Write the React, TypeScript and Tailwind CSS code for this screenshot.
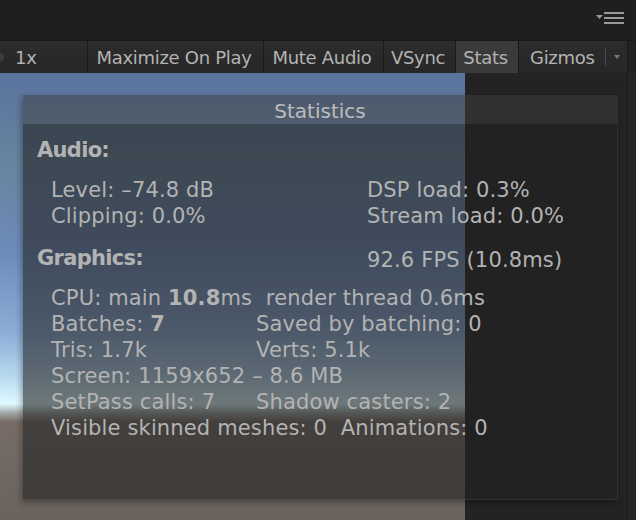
const font = { fontFamily: '"DejaVu Sans", "Liberation Sans", sans-serif' };

const Sep = () => <div className="w-px self-stretch bg-[#191919]" />;

const ToolButton = ({ label, width, active = false }: { label: string; width: string; active?: boolean }) => (
    <>
        <div
            className={`${width} flex items-center justify-center pr-[3px] ${
                active ? 'bg-[#3a3a3a]' : ''
            }`}
        >
            {label}
        </div>
        <Sep />
    </>
);

const Row = ({ left, right }: { left: React.ReactNode; right?: React.ReactNode }) => (
    <div className="flex h-[26px] items-center whitespace-nowrap">
        <div className="w-[205px]">{left}</div>
        {right && <div>{right}</div>}
    </div>
);

export default function App() {
    return (
        <div
            className="relative w-[636px] h-[520px] overflow-hidden bg-[#1f1f1f] flex flex-col text-[#b3b3b3]"
            style={font}
        >
            <div className="h-[40px] flex justify-end items-center pr-[12px] pb-[2px]">
                <svg width="28" height="14" viewBox="0 0 28 14">
                    <polygon points="0,3 7,3 3.5,7" fill="#9a9a9a" />
                    <rect x="8" y="0" width="20" height="2" fill="#9a9a9a" />
                    <rect x="8" y="5" width="20" height="2" fill="#9a9a9a" />
                    <rect x="8" y="10" width="20" height="2" fill="#9a9a9a" />
                </svg>
            </div>

            <div className="h-[33px] flex bg-gradient-to-b from-[#2c2c2c] to-[#272727] text-[18px] tracking-[-0.3px] border-t border-[#191919]">
                <div className="w-[87px] flex items-center relative">
                    <div className="w-[4px] h-[8px] rounded-r-full bg-[#3c3c3c]" />
                    <span className="ml-[11px]">1x</span>
                </div>
                <Sep />
                <ToolButton label="Maximize On Play" width="w-[175px]" />
                <ToolButton label="Mute Audio" width="w-[119px]" />
                <ToolButton label="VSync" width="w-[71px]" />
                <ToolButton label="Stats" width="w-[62px]" active />
                <div className="w-[108px] flex items-center">
                    <span className="ml-[11px] w-[75px]">Gizmos</span>
                    <div className="w-px h-[18px] bg-[#4a4a4a]" />
                    <svg width="20" height="8" viewBox="0 0 20 8" className="ml-[1px]">
                        <polygon points="7,2 13,2 10,6" fill="#7a7a7a" />
                    </svg>
                </div>
                <Sep />
                <div className="flex-1 bg-[#222]" />
            </div>

            <div className="flex-1 flex">
                <div className="w-[465px] bg-[linear-gradient(to_bottom,#5a739e_0%,#67849f_20%,#6d8bb9_40%,#8cadd6_58%,#b9d9f0_68%,#e0faff_74%,#a3aaa9_76%,#776d66_78%,#6b625d_100%)]" />
                <div className="flex-1 bg-[#232323] flex justify-end">
                    <div className="w-[9px] bg-[#262626] border-l border-[#1c1c1c]" />
                </div>
            </div>

            <div className="absolute left-[23px] top-[95px] w-[595px] h-[405px] flex flex-col border-r border-b border-[#3a3a3a]/60 shadow-[-2px_3px_6px_rgba(0,0,0,0.3)]">
                <div className="h-[29px] pt-[3px] bg-[rgba(62,62,62,0.5)] flex items-center justify-center text-[20px] text-[#bcbcbc]">
                    Statistics
                </div>
                <div className="flex-1 bg-[rgba(34,34,34,0.6)] pl-[14px] pt-[14px] text-[21px] tracking-[0.15px]">
                    <div className="h-[26px] flex items-center font-bold tracking-[-0.7px]">Audio:</div>
                    <div className="pl-[14px] mt-[14px]">
                        <div className="flex h-[26px] items-center">
                            <div className="w-[316px]">Level: –74.8 dB</div>
                            <div>DSP load: 0.3%</div>
                        </div>
                        <div className="flex h-[26px] items-center">
                            <div className="w-[316px]">Clipping: 0.0%</div>
                            <div>Stream load: 0.0%</div>
                        </div>
                    </div>
                    <div className="flex h-[26px] items-center mt-[16px]">
                        <div className="w-[330px] font-bold tracking-[-0.7px]">Graphics:</div>
                        <div className="pt-[4px]">92.6 FPS (10.8ms)</div>
                    </div>
                    <div className="pl-[14px] mt-[14px]">
                        <Row
                            left={
                                <span>
                                    CPU: main <b>10.8</b>ms&nbsp;&nbsp;render thread 0.6ms
                                </span>
                            }
                        />
                        <Row
                            left={
                                <span>
                                    Batches: <b>7</b>
                                </span>
                            }
                            right="Saved by batching: 0"
                        />
                        <Row left="Tris: 1.7k" right="Verts: 5.1k" />
                        <Row left="Screen: 1159x652 – 8.6 MB" />
                        <Row left="SetPass calls: 7" right="Shadow casters: 2" />
                        <Row left={<span>Visible skinned meshes: 0&nbsp;&nbsp;Animations: 0</span>} />
                    </div>
                </div>
            </div>
        </div>
    );
}
